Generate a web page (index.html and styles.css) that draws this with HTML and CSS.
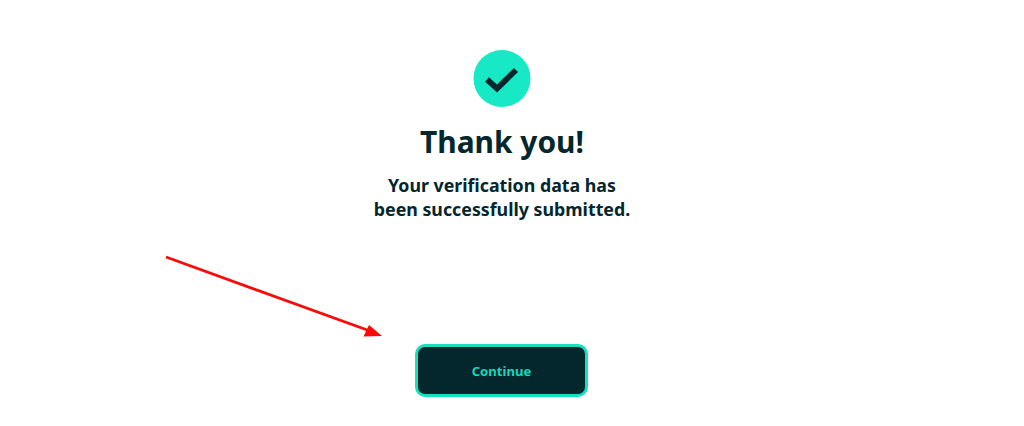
FILE: index.html
```html
<!DOCTYPE html>
<html lang="en">
<head>
<meta charset="utf-8">
<title>Thank you</title>
<link rel="stylesheet" href="styles.css">
</head>
<body>
<main class="page">
  <svg class="badge" viewBox="0 0 58 58" width="58" height="58" aria-hidden="true">
    <circle cx="29" cy="28.5" r="28.5" fill="#17e8c5"/>
    <path d="M14 29.5 L24 38.5 L43 20" fill="none" stroke="#03272d" stroke-width="5.8"/>
  </svg>
  <h1 class="title">Thank you!</h1>
  <p class="message">Your verification data has<br>been successfully submitted.</p>
  <button class="continue" type="button">Continue</button>
</main>
<svg class="arrow" viewBox="0 0 1024 426" width="1024" height="426" aria-hidden="true">
  <line x1="166" y1="257" x2="370" y2="331" stroke="#ff0808" stroke-width="2.8"/>
  <polygon points="382,336 363.5,336.5 369,325" fill="#ff0808"/>
</svg>
</body>
</html>
```

FILE: styles.css
```css
html, body {
  margin: 0;
  padding: 0;
  background: #fff;
  height: 426px;
  overflow: hidden;
}
.page {
  width: 1004px;
  display: flex;
  flex-direction: column;
  align-items: center;
  padding-top: 50px;
  font-family: "Noto Sans", "Open Sans", sans-serif;
  color: #03272d;
}
.badge { display: block; }
.title {
  margin: 12px 0 0;
  font-size: 29.9px;
  line-height: 44px;
  font-weight: 700;
}
.message {
  margin: 9px 0 0;
  font-size: 17.8px;
  line-height: 24px;
  font-weight: 700;
  text-align: center;
}
.continue {
  margin: 123px 1px 0 0;
  width: 173px;
  height: 53px;
  border: 3px solid #17e0bf;
  border-radius: 10px;
  background: #03272d;
  color: #14d8b8;
  font-family: "Noto Sans", "Open Sans", sans-serif;
  font-size: 13.1px;
  font-weight: 700;
}
.arrow {
  position: absolute;
  left: 0;
  top: 0;
  pointer-events: none;
}
```
